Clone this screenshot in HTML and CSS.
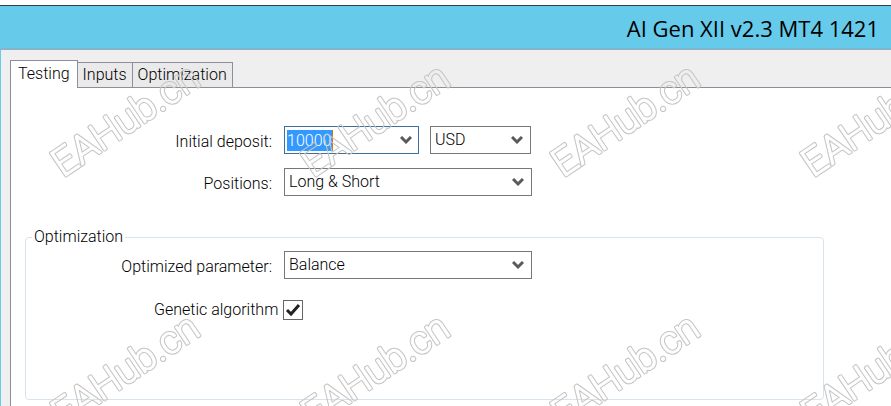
FILE: index.html
```html
<!DOCTYPE html>
<html lang="en">
<head>
    <meta charset="UTF-8">
    <meta name="viewport" content="width=device-width, initial-scale=1.0">
    <title>AI Gen XII v2.3 MT4 1421</title>
    <link rel="stylesheet" href="styles.css">
</head>
<body>
    <div class="window">
        <header class="titlebar">
            <h1>AI Gen XII v2.3 MT4 1421</h1>
        </header>

        <main class="client">
            <div class="tabs" role="tablist">
                <button type="button" class="tab active" role="tab" aria-selected="true">Testing</button>
                <button type="button" class="tab" role="tab" aria-selected="false">Inputs</button>
                <button type="button" class="tab" role="tab" aria-selected="false">Optimization</button>
            </div>

            <form class="panel">
                <div class="row">
                    <label for="deposit">Initial deposit:</label>
                    <div class="controls">
                        <div class="combo deposit">
                            <input type="text" id="deposit" value="10000">
                            <button type="button" class="drop" aria-label="Deposit values">
                                <svg class="chevron" viewBox="0 0 12 9"><path d="M1 1 L6 6 L11 1" /></svg>
                            </button>
                        </div>
                        <div class="combo currency">
                            <select id="currency" aria-label="Currency">
                                <option>USD</option>
                            </select>
                            <svg class="chevron" viewBox="0 0 12 9"><path d="M1 1 L6 6 L11 1" /></svg>
                        </div>
                    </div>
                </div>

                <div class="row">
                    <label for="positions">Positions:</label>
                    <div class="combo wide">
                        <select id="positions">
                            <option>Long &amp; Short</option>
                        </select>
                        <svg class="chevron" viewBox="0 0 12 9"><path d="M1 1 L6 6 L11 1" /></svg>
                    </div>
                </div>

                <fieldset class="group">
                    <legend>Optimization</legend>
                    <div class="row">
                        <label for="parameter">Optimized parameter:</label>
                        <div class="combo wide">
                            <select id="parameter">
                                <option>Balance</option>
                            </select>
                            <svg class="chevron" viewBox="0 0 12 9"><path d="M1 1 L6 6 L11 1" /></svg>
                        </div>
                    </div>
                    <div class="check-row">
                        <label for="genetic">Genetic algorithm</label>
                        <span class="check">
                            <input type="checkbox" id="genetic" checked>
                            <svg viewBox="0 0 20 20"><path d="M4 10 L8 14 L16 5" /></svg>
                        </span>
                    </div>
                </fieldset>
            </form>
        </main>
    </div>

    <!-- repeating watermark -->
    <svg class="watermark" aria-hidden="true">
        <defs>
            <mask id="outline" maskUnits="userSpaceOnUse" x="-10" y="-50" width="220" height="80">
                <text class="mark mark-outer">EAHub.cn</text>
                <text class="mark mark-inner">EAHub.cn</text>
            </mask>
            <pattern id="tile" width="250" height="250" patternUnits="userSpaceOnUse">
                <g transform="translate(63 178) rotate(-34)">
                    <rect class="ink" x="-10" y="-50" width="220" height="80" mask="url(#outline)" />
                </g>
            </pattern>
        </defs>
        <rect width="100%" height="100%" fill="url(#tile)" />
    </svg>
</body>
</html>
```

FILE: styles.css
```css
* {
    box-sizing: border-box;
}
body {
    margin: 0;
    background-color: #fff;
    color: #000;
    font-family: Roboto, "Liberation Sans", sans-serif;
    font-size: 16px;
    font-weight: 300;
    line-height: 20px;
    overflow: hidden;
}
button, input, select {
    font: inherit;
    color: inherit;
}
.window {
    display: flex;
    flex-direction: column;
    height: 100vh;
    padding-top: 5px;
}
.titlebar {
    padding: 8px 12px 6px;
    border-top: 1px solid #333a44;
    border-bottom: 2px solid #85b3cb;
    background-color: #66caea;
    text-align: right;
}
h1 {
    margin: 0;
    color: #000;
    font-family: "Open Sans", "Noto Sans", sans-serif;
    font-size: 22px;
    font-weight: 400;
    line-height: 28px;
}
.client {
    display: flex;
    flex: 1;
    flex-direction: column;
    min-height: 0;
    padding: 10px 0 0 9px;
    border-left: 1px solid #66caea;
    background-color: #efefef;
}
.tabs {
    display: flex;
    align-items: flex-end;
    height: 28px;
}
.tab {
    height: 26px;
    padding: 0 5px;
    border: 1px solid #8c8f9a;
    border-left: 0;
    background-color: #eaeaea;
}
.tab.active {
    height: 28px;
    padding: 0 7px 2px;
    border-left: 1px solid #8c8f9a;
    border-bottom: 0;
    background-color: #fff;
    z-index: 1;
}
.panel {
    flex: 1;
    margin-top: -1px;
    padding: 38px 67px 0 14px;
    border: 1px solid #8c8f9a;
    border-right: 0;
    border-bottom: 0;
    background-color: #fff;
}
.row {
    display: grid;
    grid-template-columns: 247px 1fr;
    column-gap: 12px;
    align-items: center;
    margin-bottom: 14px;
}
.row label {
    padding-top: 4px;
    text-align: right;
}
.controls {
    display: flex;
    gap: 11px;
}
.combo {
    display: grid;
    align-items: center;
    height: 28px;
    border: 1px solid #777;
    background-color: #fff;
}
.combo select {
    grid-area: 1 / 1;
    width: 100%;
    height: 26px;
    padding: 0 24px 0 4px;
    border: 0;
    background-color: transparent;
    appearance: none;
}
.combo > .chevron {
    grid-area: 1 / 1;
    justify-self: end;
    margin-right: 7px;
    pointer-events: none;
}
.chevron {
    display: block;
    width: 12px;
    height: 9px;
    fill: none;
    stroke: #5a5a5a;
    stroke-width: 3;
}
.wide {
    width: 248px;
}
.currency {
    width: 101px;
}
.deposit {
    display: flex;
    justify-content: space-between;
    width: 135px;
    padding-left: 2px;
    border-color: #3f7099;
}
.deposit input {
    width: 46px;
    height: 21px;
    padding: 0;
    border: 0;
    border-right: 1px solid #d0741c;
    outline: 0;
    background-color: #39f;
    color: #fff;
}
.drop {
    padding: 6px;
    border: 0;
    background-color: transparent;
}
.group {
    height: 173px;
    margin: 31px 0 0;
    padding: 4px 0 0;
    border: 1px solid #d9e3eb;
    border-radius: 4px;
}
.group legend {
    margin-left: 6px;
    padding: 0 2px;
}
.group .row {
    grid-template-columns: 246px 1fr;
    margin-bottom: 21px;
}
.check-row {
    display: flex;
    align-items: center;
    gap: 5px;
    margin-left: 128px;
}
.check {
    display: grid;
    width: 20px;
    height: 20px;
}
.check input {
    grid-area: 1 / 1;
    width: 20px;
    height: 20px;
    margin: 0;
    border: 1px solid #666;
    background-color: #fff;
    appearance: none;
}
.check svg {
    grid-area: 1 / 1;
    fill: none;
    stroke: #222;
    stroke-width: 3;
    pointer-events: none;
    visibility: hidden;
}
.check input:checked + svg {
    visibility: visible;
}
.watermark {
    position: absolute;
    top: 0;
    left: 0;
    width: 100%;
    height: 100%;
    pointer-events: none;
    z-index: 2;
}
.mark {
    font-family: Roboto, "Liberation Sans", sans-serif;
    font-size: 39px;
    font-weight: 300;
    stroke-linejoin: round;
}
.mark-outer {
    fill: #fff;
    stroke: #fff;
    stroke-width: 3;
}
.mark-inner {
    fill: #000;
    stroke: #000;
    stroke-width: 1;
}
.ink {
    fill: #c4c4c4;
}
```
